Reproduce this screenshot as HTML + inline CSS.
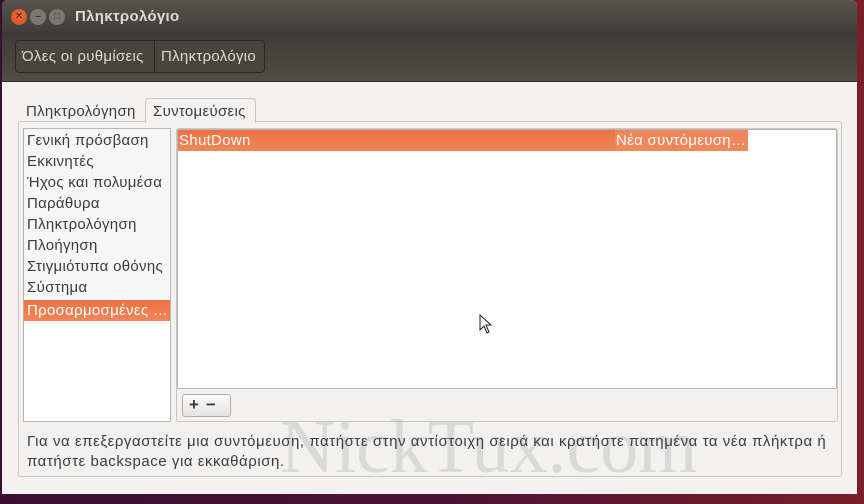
<!DOCTYPE html>
<html><head><meta charset="utf-8"><style>
*{margin:0;padding:0;box-sizing:border-box}
body{width:864px;height:504px;overflow:hidden;font-family:"Liberation Sans","DejaVu Sans",sans-serif;font-size:15px;letter-spacing:0.3px;color:#3c3c3c;
background:linear-gradient(90deg,#3a1030 0%,#4a1234 50%,#7a1e2a 100%);position:relative}
.win{position:absolute;left:2px;top:0;width:855px;height:494px;border-radius:6px 6px 0 0;overflow:hidden;background:#f2f1f0}
.title{position:absolute;left:0;top:0;width:100%;height:32px;background:linear-gradient(#57544d,#3f3e3a);color:#dfdbd2;font-weight:bold;font-size:15px}
.title span{position:absolute;left:73px;top:8px}
.btn{position:absolute;top:9px;width:16px;height:16px;border-radius:50%;font-size:10px;line-height:16px;text-align:center;letter-spacing:0}
.tool{position:absolute;left:0;top:32px;width:100%;height:50px;background:linear-gradient(#3c3b37,#504d46);border-bottom:1px solid #2e2d2a}
.crumb{position:absolute;left:13px;top:8px;height:33px;border:1px solid #2a2926;border-radius:4px;background:#47453f;display:flex;color:#dfdbd2;font-size:15px}
.crumb div{padding:7px 8px 0 6px}
.abs{position:absolute}
.item{position:absolute;left:27px;color:#3c3c3c}
</style></head><body>
<div class="win">
<div class="title">
<div class="btn" style="left:9px;background:radial-gradient(circle at 50% 40%,#f36e3f,#d2461c);color:#5a1a0a">✕</div>
<div class="btn" style="left:28px;background:#7b7872;color:#3a3935">–</div>
<div class="btn" style="left:47px;background:#7b7872;color:#3a3935">□</div>
<span>Πληκτρολόγιο</span></div>
<div class="tool"><div class="crumb"><div style="border-right:1px solid #2a2926;width:139px">Όλες οι ρυθμίσεις</div><div>Πληκτρολόγιο</div></div></div>
</div>
<div class="abs" style="left:18px;top:121px;width:824px;height:356px;border:1px solid #c8c6c2;border-radius:3px;background:#f2f1f0"></div>
<div class="abs" style="left:26px;top:103px">Πληκτρολόγηση</div>
<div class="abs" style="left:145px;top:98px;width:111px;height:25px;border:1px solid #c8c6c2;border-bottom:none;border-radius:4px 4px 0 0;background:#f2f1f0;padding:4px 0 0 7px">Συντομεύσεις</div>
<div class="abs" style="left:23px;top:128px;width:148px;height:294px;border:1px solid #b8b6b2;background:#fff"></div>
<div class="abs" style="left:24px;top:129px;width:146px;height:171px;background:#f6f6f6"></div>
<div class="item" style="top:132px">Γενική πρόσβαση</div>
<div class="item" style="top:153px">Εκκινητές</div>
<div class="item" style="top:174px">Ήχος και πολυμέσα</div>
<div class="item" style="top:195px">Παράθυρα</div>
<div class="item" style="top:216px">Πληκτρολόγηση</div>
<div class="item" style="top:237px">Πλοήγηση</div>
<div class="item" style="top:258px">Στιγμιότυπα οθόνης</div>
<div class="item" style="top:279px">Σύστημα</div>
<div class="abs" style="left:24px;top:300px;width:146px;height:21px;background:linear-gradient(#ec7240,#f0865a)"></div>
<div class="item" style="top:302px;color:#fff;white-space:nowrap">Προσαρμοσμένες …</div>
<div class="abs" style="left:176px;top:128px;width:662px;height:294px;border:1px solid #c8c6c2;border-radius:3px;background:#f2f1f0"></div>
<div class="abs" style="left:177px;top:129px;width:660px;height:260px;border:1px solid #b8b6b2;background:#fff"></div>
<div class="abs" style="left:178px;top:130px;width:437px;height:21px;background:linear-gradient(#ec7240,#f0865a)"></div>
<div class="abs" style="left:615px;top:130px;width:133px;height:21px;background:#f0865a"></div>
<div class="abs" style="left:179px;top:132px;color:#fff">ShutDown</div>
<div class="abs" style="left:616px;top:132px;color:#fff;white-space:nowrap">Νέα συντόμευση…</div>
<div class="abs" style="left:182px;top:394px;width:49px;height:23px;border:1px solid #b0aea9;border-radius:3px;background:linear-gradient(#fafafa,#e6e5e3);font-size:17px;font-weight:bold;padding:0 0 0 6px;letter-spacing:7px">+−</div>
<div class="abs" style="left:280px;top:404px;font-family:'Liberation Serif',serif;font-size:76px;color:rgba(185,190,185,.45);letter-spacing:0">NickTux.com</div>
<div class="abs" style="left:27px;top:432px;font-size:15px;line-height:20px;width:830px;letter-spacing:0.55px;white-space:nowrap">Για να επεξεργαστείτε μια συντόμευση, πατήστε στην αντίστοιχη σειρά και κρατήστε πατημένα τα νέα πλήκτρα ή<br>πατήστε backspace για εκκαθάριση.</div>
<svg class="abs" style="left:479px;top:314px" width="14" height="20"><path d="M1 1 L1 16 L5 12 L8 19 L10 18 L7 11 L12 11 Z" fill="#fff" stroke="#222"/></svg>
</body></html>
